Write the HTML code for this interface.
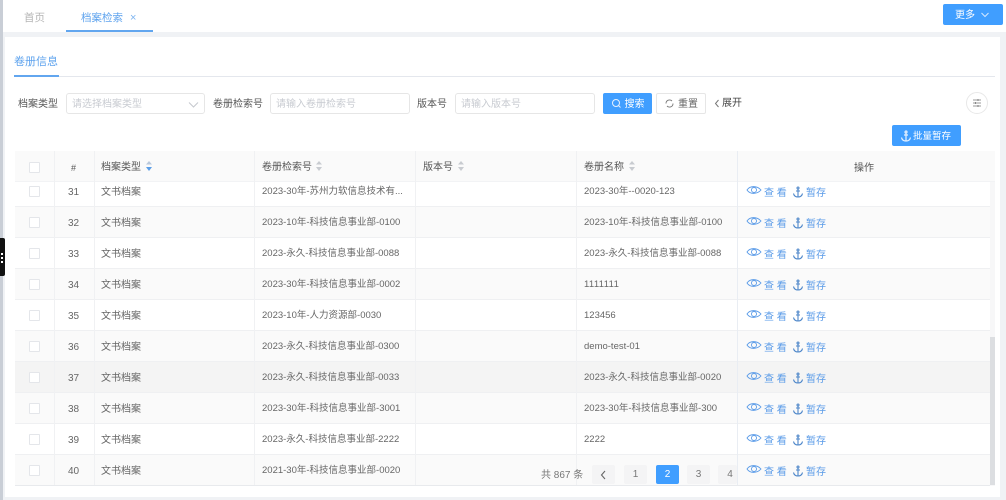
<!DOCTYPE html>
<html><head><meta charset="utf-8">
<style>
*{box-sizing:border-box;margin:0;padding:0}
html,body{width:1006px;height:500px;overflow:hidden;background:#f0f2f5}
body{font-family:"Liberation Sans","Noto Sans CJK SC",sans-serif;position:relative;filter:blur(.35px)}
.a{position:absolute;white-space:nowrap}
.t{font-size:10px;color:#555;line-height:14px;top:98px}
.inp{position:absolute;top:93px;height:21px;border:1px solid #e6e6e6;border-radius:3px;background:#fff;font-size:10px;color:#c8cbd1;line-height:21px;padding-left:5px;white-space:nowrap}
.btn{position:absolute;border-radius:2px;font-size:10px;text-align:center;white-space:nowrap}
.row{position:absolute;left:15px;width:975px;height:31px;border-bottom:1px solid #eff0f2;background:#fff}
.row.s{background:#fafafa}
.row.h{background:#f4f4f4}
.row span{position:absolute;font-size:10px;color:#666;line-height:14px;white-space:nowrap;top:10px}
.row .c{left:14px;width:11px;height:11px;border:1px solid #e4e6ea;background:#fff;border-radius:1px}
.row .n{left:39px;width:39px;text-align:center}
.row .k{left:86px}
.row .v{left:247px;font-size:9.5px;top:9px}
.row .m{left:569px;font-size:9.5px;top:9px}
.row .o1{left:749px;color:#5a9be8;top:11px}
.row .o2{left:791px;color:#5a9be8;top:11px}
.row svg{position:absolute}
.row .e{left:731px;top:8px;fill:none;stroke:#5a9be8;stroke-width:.9}
.row .an{left:777px;top:10px;fill:none;stroke:#4d86c9;stroke-width:1.1}
.vl{position:absolute;top:151px;width:1px;height:334px;background:#f0f1f3}
.th{position:absolute;top:161px;font-size:10px;color:#555;line-height:14px;white-space:nowrap}
.so{position:absolute;top:160px}
.pg{position:absolute;top:465px;width:23px;height:19px;background:#f4f4f5;font-size:10px;color:#777;text-align:center;line-height:20px;border-radius:2px}
</style></head><body>
<svg width="0" height="0" style="position:absolute"><defs>
<symbol id="eye" viewBox="0 0 16 12"><path d="M1 6C4 1.500 11 1.500 15 6C11 10.500 4 10.500 1 6Z"/><circle cx="8" cy="6" r="2.500"/></symbol>
<symbol id="anc" viewBox="0 0 12 12"><circle cx="6" cy="2" r="1"/><path d="M6 3V11M1.500 7.500C2 10 4 11 6 11S10 10 10.500 7.500M4 5H8"/></symbol>
</defs></svg>
<div class="a" style="left:0;top:0;width:1006px;height:32px;background:#fff"></div>
<div class="a" style="left:0;top:0;width:3px;height:500px;background:#c9ced6"></div>
<div class="a" style="left:24px;top:11px;font-size:10.5px;color:#b5b5b5;line-height:14px">首页</div>
<div class="a" style="left:81px;top:11px;font-size:10.5px;color:#5ea3ee;line-height:14px">档案检索</div>
<div class="a" style="left:130px;top:11px;font-size:11px;color:#7db4f0;line-height:14px">×</div>
<div class="a" style="left:66px;top:30px;width:87px;height:2px;background:#62a6ef"></div>
<div class="btn" style="left:943px;top:4px;width:60px;height:21px;background:#409eff;color:#fff;line-height:23px;padding-right:16px">更多</div>
<svg class="a" style="left:980px;top:11px" width="10" height="8"><path d="M1.500 2 L5 5.500 L8.500 2" fill="none" stroke="#d5e8ff" stroke-width="1"/></svg>

<div class="a" style="left:5px;top:37px;width:995px;height:460px;background:#fff"></div>
<div class="a" style="left:14px;top:54px;font-size:11px;color:#5ea3ee;line-height:16px">卷册信息</div>
<div class="a" style="left:14px;top:76px;width:981px;height:1px;background:#e4e7ed"></div>
<div class="a" style="left:14px;top:75px;width:45px;height:2px;background:#62a6ef"></div>

<div class="a t" style="left:18px">档案类型</div>
<div class="inp" style="left:66px;width:139px">请选择档案类型</div>
<svg class="a" style="left:188px;top:101px" width="11" height="8"><path d="M1 1.500 L5.500 6 L10 1.500" fill="none" stroke="#c5c8ce" stroke-width="1"/></svg>
<div class="a t" style="left:213px">卷册检索号</div>
<div class="inp" style="left:270px;width:140px">请输入卷册检索号</div>
<div class="a t" style="left:417px">版本号</div>
<div class="inp" style="left:455px;width:140px">请输入版本号</div>
<div class="btn" style="left:603px;top:93px;width:49px;height:21px;background:#409eff;color:#fff;line-height:23px;padding-left:14px">搜索</div>
<svg class="a" style="left:611px;top:98px" width="11" height="11"><circle cx="5" cy="5" r="3.500" fill="none" stroke="#e6f1ff" stroke-width="1"/><path d="M7.500 7.500L9.500 9.500" stroke="#e6f1ff"/></svg>
<div class="btn" style="left:656px;top:93px;width:50px;height:21px;background:#fff;border:1px solid #e6e6e6;color:#666;line-height:21px;padding-left:14px">重置</div>
<svg class="a" style="left:665px;top:99px" width="9" height="9"><path d="M1 4.500A3.500 3.500 0 0 1 7 2M8 4.500A3.500 3.500 0 0 1 2 7" fill="none" stroke="#777" stroke-width=".9"/></svg>
<svg class="a" style="left:714px;top:99px" width="6" height="9"><path d="M4.500 1L1.500 4.500L4.500 8" fill="none" stroke="#777"/></svg>
<div class="a t" style="left:722px;top:97px;color:#444">展开</div>
<div class="a" style="left:966px;top:92px;width:22px;height:22px;border:1px solid #e8e8e8;border-radius:50%;background:#fff"></div>
<svg class="a" style="left:972px;top:98px" width="10" height="10"><path d="M1 2H9M1 5H9M1 8H9" stroke="#777" stroke-width=".8"/><path d="M6 1V3M3.500 4V6M6 7V9" stroke="#777" stroke-width=".8"/></svg>
<div class="btn" style="left:892px;top:125px;width:69px;height:21px;background:#409eff;color:#fff;line-height:23px;padding-left:21px;text-align:left;font-size:9.500px">批量暂存</div>
<svg class="a" style="left:900px;top:130px" width="12" height="12"><g fill="none" stroke="#e6f1ff" stroke-width="1.200"><circle cx="6" cy="2" r="1"/><path d="M6 3V11M1.500 7.500C2 10 4 11 6 11S10 10 10.500 7.500M4 5H8"/></g></svg>

<div class="row" style="top:176px"><span class="c"></span><span class="n">31</span><span class="k">文书档案</span><span class="v">2023-30年-苏州力软信息技术有...</span><span class="m">2023-30年--0020-123</span><svg class="e" width="16" height="12"><use href="#eye"/></svg><span class="o1">查 看</span><svg class="an" width="12" height="12"><use href="#anc"/></svg><span class="o2">暂存</span></div>
<div class="row s" style="top:207px"><span class="c"></span><span class="n">32</span><span class="k">文书档案</span><span class="v">2023-10年-科技信息事业部-0100</span><span class="m">2023-10年-科技信息事业部-0100</span><svg class="e" width="16" height="12"><use href="#eye"/></svg><span class="o1">查 看</span><svg class="an" width="12" height="12"><use href="#anc"/></svg><span class="o2">暂存</span></div>
<div class="row" style="top:238px"><span class="c"></span><span class="n">33</span><span class="k">文书档案</span><span class="v">2023-永久-科技信息事业部-0088</span><span class="m">2023-永久-科技信息事业部-0088</span><svg class="e" width="16" height="12"><use href="#eye"/></svg><span class="o1">查 看</span><svg class="an" width="12" height="12"><use href="#anc"/></svg><span class="o2">暂存</span></div>
<div class="row s" style="top:269px"><span class="c"></span><span class="n">34</span><span class="k">文书档案</span><span class="v">2023-30年-科技信息事业部-0002</span><span class="m" style="letter-spacing:.35px">1111111</span><svg class="e" width="16" height="12"><use href="#eye"/></svg><span class="o1">查 看</span><svg class="an" width="12" height="12"><use href="#anc"/></svg><span class="o2">暂存</span></div>
<div class="row" style="top:300px"><span class="c"></span><span class="n">35</span><span class="k">文书档案</span><span class="v">2023-10年-人力资源部-0030</span><span class="m">123456</span><svg class="e" width="16" height="12"><use href="#eye"/></svg><span class="o1">查 看</span><svg class="an" width="12" height="12"><use href="#anc"/></svg><span class="o2">暂存</span></div>
<div class="row s" style="top:331px"><span class="c"></span><span class="n">36</span><span class="k">文书档案</span><span class="v">2023-永久-科技信息事业部-0300</span><span class="m">demo-test-01</span><svg class="e" width="16" height="12"><use href="#eye"/></svg><span class="o1">查 看</span><svg class="an" width="12" height="12"><use href="#anc"/></svg><span class="o2">暂存</span></div>
<div class="row h" style="top:362px"><span class="c"></span><span class="n">37</span><span class="k">文书档案</span><span class="v">2023-永久-科技信息事业部-0033</span><span class="m">2023-永久-科技信息事业部-0020</span><svg class="e" width="16" height="12"><use href="#eye"/></svg><span class="o1">查 看</span><svg class="an" width="12" height="12"><use href="#anc"/></svg><span class="o2">暂存</span></div>
<div class="row s" style="top:393px"><span class="c"></span><span class="n">38</span><span class="k">文书档案</span><span class="v">2023-30年-科技信息事业部-3001</span><span class="m">2023-30年-科技信息事业部-300</span><svg class="e" width="16" height="12"><use href="#eye"/></svg><span class="o1">查 看</span><svg class="an" width="12" height="12"><use href="#anc"/></svg><span class="o2">暂存</span></div>
<div class="row" style="top:424px"><span class="c"></span><span class="n">39</span><span class="k">文书档案</span><span class="v">2023-永久-科技信息事业部-2222</span><span class="m">2222</span><svg class="e" width="16" height="12"><use href="#eye"/></svg><span class="o1">查 看</span><svg class="an" width="12" height="12"><use href="#anc"/></svg><span class="o2">暂存</span></div>
<div class="row s" style="top:455px"><span class="c"></span><span class="n">40</span><span class="k">文书档案</span><span class="v">2021-30年-科技信息事业部-0020</span><svg class="e" width="16" height="12"><use href="#eye"/></svg><span class="o1">查 看</span><svg class="an" width="12" height="12"><use href="#anc"/></svg><span class="o2">暂存</span></div>

<div class="a" style="left:15px;top:151px;width:980px;height:31px;background:#fafafa;border-bottom:1px solid #f2f3f5"></div>
<div class="a" style="left:29px;top:162px;width:11px;height:11px;border:1px solid #e4e6ea;background:#fff;border-radius:1px"></div>
<div class="th" style="left:71px;font-size:9px">#</div>
<div class="th" style="left:101px">档案类型</div>
<svg class="so" style="left:145px" width="8" height="12"><path d="M4 1L7 4.500H1Z" fill="#b9c8dc"/><path d="M4 11L7 7H1Z" fill="#5b9ee8"/></svg>
<div class="th" style="left:262px">卷册检索号</div>
<svg class="so" style="left:315px" width="8" height="12"><path d="M4 1L7 4.500H1Z" fill="#c8cbd0"/><path d="M4 11L7 7H1Z" fill="#c8cbd0"/></svg>
<div class="th" style="left:423px">版本号</div>
<svg class="so" style="left:457px" width="8" height="12"><path d="M4 1L7 4.500H1Z" fill="#c8cbd0"/><path d="M4 11L7 7H1Z" fill="#c8cbd0"/></svg>
<div class="th" style="left:584px">卷册名称</div>
<svg class="so" style="left:628px" width="8" height="12"><path d="M4 1L7 4.500H1Z" fill="#c8cbd0"/><path d="M4 11L7 7H1Z" fill="#c8cbd0"/></svg>
<div class="th" style="left:854px;top:162px">操作</div>

<div class="vl" style="left:54px"></div>
<div class="vl" style="left:94px"></div>
<div class="vl" style="left:254px"></div>
<div class="vl" style="left:415px"></div>
<div class="vl" style="left:576px"></div>
<div class="vl" style="left:737px;background:#e9edf3"></div>
<div class="a" style="left:15px;top:485px;width:980px;height:1px;background:#e8eaed"></div>
<div class="a" style="left:990px;top:182px;width:5px;height:304px;background:#f7f7f8"></div>
<div class="a" style="left:990px;top:337px;width:5px;height:148px;background:#dcdee1"></div>

<div class="a" style="left:541px;top:469px;font-size:10px;color:#777;line-height:14px">共 867 条</div>
<div class="pg" style="left:592px"></div>
<svg class="a" style="left:600px;top:470px" width="7" height="10"><path d="M5 1L1.500 5L5 9" fill="none" stroke="#666" stroke-width="1.100"/></svg>
<div class="pg" style="left:624px">1</div>
<div class="pg" style="left:656px;background:#409eff;color:#fff">2</div>
<div class="pg" style="left:687px">3</div>
<div class="pg" style="left:718px;width:19px;padding-left:5px">4</div>

<div class="a" style="left:0;top:238px;width:5px;height:38px;background:#111;border-radius:0 2px 2px 0"></div>
<div class="a" style="left:1px;top:253px;width:2px;height:2px;background:#fff"></div>
<div class="a" style="left:1px;top:257px;width:2px;height:2px;background:#fff"></div>
<div class="a" style="left:1px;top:261px;width:2px;height:2px;background:#fff"></div>
</body></html>
